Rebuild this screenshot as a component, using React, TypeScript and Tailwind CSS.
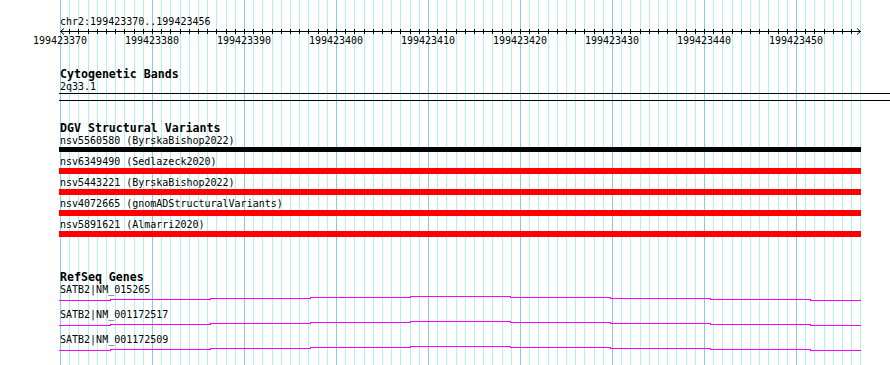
const X0 = 60
const BP = 9.2
const BASES = 87
const START = 199423370

const xAt = (i: number) => Math.round(X0 + i * BP) + 0.5

const variants = [
  { name: "nsv5560580 (ByrskaBishop2022)", color: "bg-black", h: "h-[5px] mb-[4px]" },
  { name: "nsv6349490 (Sedlazeck2020)", color: "bg-[#ff0000]", h: "h-[6px] mb-[3px]" },
  { name: "nsv5443221 (ByrskaBishop2022)", color: "bg-[#ff0000]", h: "h-[6px] mb-[3px]" },
  { name: "nsv4072665 (gnomADStructuralVariants)", color: "bg-[#ff0000]", h: "h-[6px] mb-[3px]" },
  { name: "nsv5891621 (Almarri2020)", color: "bg-[#ff0000]", h: "h-[6px] mb-[3px]" },
]

const genes = ["SATB2|NM_015265", "SATB2|NM_001172517", "SATB2|NM_001172509"]

// step curve of the transcript line, in px from the row's svg top
const geneSteps = [59, 110, 210, 310, 410, 510, 610, 710, 810, 861]
const geneLevels = [5, 4, 3, 2, 1, 2, 3, 4, 5]
const genePath = geneLevels
  .map((lv, i) => `${i === 0 ? `M${geneSteps[0]} ${lv + 0.5}` : `V${lv + 0.5}`} H${geneSteps[i + 1]}`)
  .join(" ")

function GridLines() {
  return (
    <svg className="absolute inset-0" width={890} height={365} shapeRendering="crispEdges">
      {Array.from({ length: BASES + 1 }, (_, i) => (
        <line
          key={i}
          x1={xAt(i)}
          x2={xAt(i)}
          y1={0}
          y2={365}
          stroke={i % 10 === 0 ? "#84cbf0" : "#b2f0f0"}
          strokeWidth={1}
        />
      ))}
    </svg>
  )
}

function Ruler() {
  return (
    <div>
      <div className="pt-[16px] pl-[60px] text-[10px] leading-[11px]">chr2:199423370..199423456</div>
      {/* axis with a tick per base */}
      <svg width={890} height={7} className="block overflow-visible" shapeRendering="crispEdges">
        <line x1={60} x2={861} y1={4.5} y2={4.5} stroke="#000" />
        {Array.from({ length: BASES - 1 }, (_, i) => (
          <line key={i} x1={xAt(i + 1)} x2={xAt(i + 1)} y1={2} y2={7} stroke="#000" />
        ))}
        <polyline points="64,1.5 60.5,4.5 64,7.5" fill="none" stroke="#000" shapeRendering="auto" />
        <polyline points="857,1.5 860.5,4.5 857,7.5" fill="none" stroke="#000" shapeRendering="auto" />
      </svg>
      <div className="flex mt-[1px] ml-[14px] text-[10px] leading-[11px]">
        {Array.from({ length: 9 }, (_, k) => (
          <div key={k} className="w-[92px] shrink-0 text-center">
            {START + k * 10}
          </div>
        ))}
      </div>
    </div>
  )
}

function TrackTitle({ children, className }: { children: string; className: string }) {
  return <div className={`ml-px font-bold text-[11.6px] leading-[12px] ${className}`}>{children}</div>
}

export default function App() {
  return (
    <div
      className="relative w-[890px] h-[365px] overflow-hidden bg-white text-black"
      style={{ fontFamily: '"DejaVu Sans Mono", monospace' }}
    >
      <GridLines />
      <div className="relative">
        <Ruler />

        <div className="pl-[59px]">
          {/* Cytogenetic Bands */}
          <TrackTitle className="mt-[22px]">Cytogenetic Bands</TrackTitle>
          <div className="ml-px mt-[1px] text-[10px] leading-[11px]">2q33.1</div>
          <div className="mt-[1px] h-[8px] border-y border-black" />

          {/* DGV Structural Variants */}
          <TrackTitle className="mt-[21px]">DGV Structural Variants</TrackTitle>
          <div className="mt-[1px]">
            {variants.map((v) => (
              <div key={v.name}>
                <div className="ml-px text-[10px] leading-[11px]">{v.name}</div>
                <div className={`mt-[1px] w-[802px] ${v.h} ${v.color}`} />
              </div>
            ))}
          </div>

          {/* RefSeq Genes */}
          <TrackTitle className="mt-[34px]">RefSeq Genes</TrackTitle>
          <div className="mt-[1px]">
            {genes.map((g) => (
              <div key={g}>
                <div className="ml-px text-[10px] leading-[11px]">{g}</div>
                <svg width={890} height={14} className="block -ml-[59px]" shapeRendering="crispEdges">
                  <path d={genePath} fill="none" stroke="#ff00ff" strokeWidth={1} />
                </svg>
              </div>
            ))}
          </div>
        </div>
      </div>
    </div>
  )
}
